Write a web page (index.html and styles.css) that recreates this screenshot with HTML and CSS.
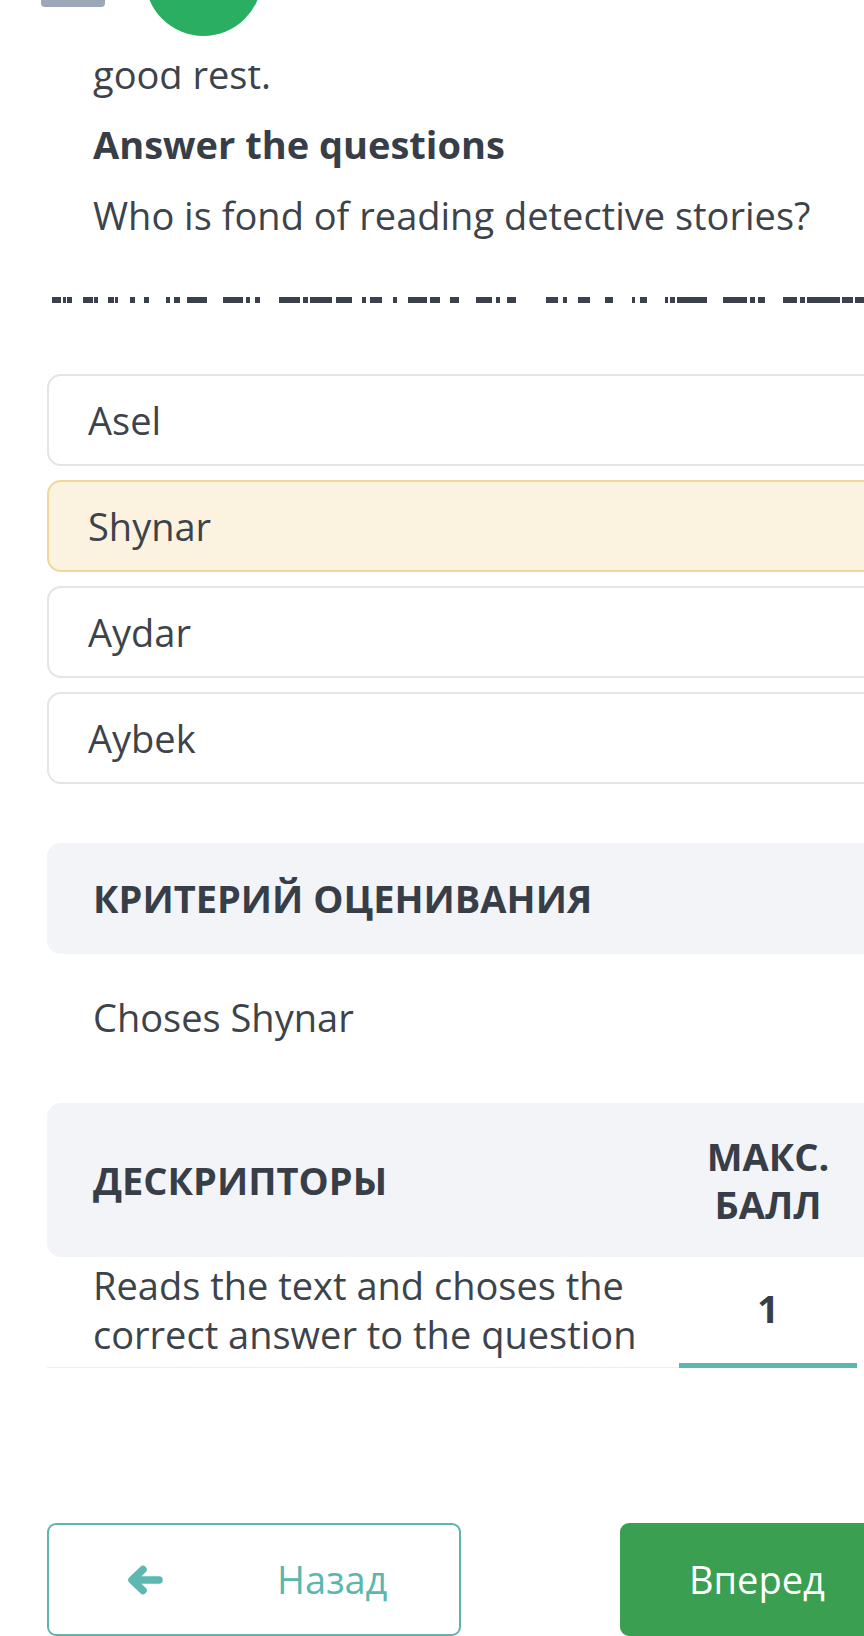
FILE: index.html
```html
<!DOCTYPE html>
<html lang="ru">
<head>
<meta charset="utf-8">
<title>Задание</title>
<link rel="stylesheet" href="styles.css">
</head>
<body>
<div class="viewport">
  <header class="topbar">
    <span class="tab-indicator"></span>
    <span class="avatar"></span>
  </header>
  <main class="content">
    <p class="text">good rest.</p>
    <p class="text heading">Answer the questions</p>
    <p class="text question">Who is fond of reading detective stories?</p>
    <div class="blank">
      <svg width="817" height="6" viewBox="0 0 817 6" aria-hidden="true">
        <g fill="#3b414a">
          <rect x="5" y="0" width="9" height="6"/>
          <rect x="16" y="0" width="3" height="6"/>
          <rect x="20" y="0" width="5" height="6"/>
          <rect x="36" y="0" width="10" height="6"/>
          <rect x="47" y="0" width="4" height="6"/>
          <rect x="61" y="0" width="6" height="6"/>
          <rect x="68" y="0" width="3" height="6"/>
          <rect x="83" y="0" width="5" height="6"/>
          <rect x="97" y="0" width="5" height="6"/>
          <rect x="119" y="0" width="4" height="6"/>
          <rect x="127" y="0" width="6" height="6"/>
          <rect x="140" y="0" width="20" height="6"/>
          <rect x="176" y="0" width="20" height="6"/>
          <rect x="199" y="0" width="4" height="6"/>
          <rect x="208" y="0" width="5" height="6"/>
          <rect x="232" y="0" width="21" height="6"/>
          <rect x="256" y="0" width="5" height="6"/>
          <rect x="263" y="0" width="22" height="6"/>
          <rect x="289" y="0" width="16" height="6"/>
          <rect x="315" y="0" width="4" height="6"/>
          <rect x="323" y="0" width="12" height="6"/>
          <rect x="346" y="0" width="4" height="6"/>
          <rect x="361" y="0" width="19" height="6"/>
          <rect x="383" y="0" width="10" height="6"/>
          <rect x="403" y="0" width="9" height="6"/>
          <rect x="429" y="0" width="16" height="6"/>
          <rect x="449" y="0" width="4" height="6"/>
          <rect x="460" y="0" width="9" height="6"/>
          <rect x="499" y="0" width="12" height="6"/>
          <rect x="516" y="0" width="4" height="6"/>
          <rect x="531" y="0" width="12" height="6"/>
          <rect x="558" y="0" width="8" height="6"/>
          <rect x="585" y="0" width="3" height="6"/>
          <rect x="593" y="0" width="7" height="6"/>
          <rect x="618" y="0" width="3" height="6"/>
          <rect x="623" y="0" width="5" height="6"/>
          <rect x="630" y="0" width="30" height="6"/>
          <rect x="676" y="0" width="24" height="6"/>
          <rect x="703" y="0" width="5" height="6"/>
          <rect x="711" y="0" width="7" height="6"/>
          <rect x="736" y="0" width="14" height="6"/>
          <rect x="753" y="0" width="5" height="6"/>
          <rect x="760" y="0" width="33" height="6"/>
          <rect x="795" y="0" width="11" height="6"/>
          <rect x="808" y="0" width="9" height="6"/>
        </g>
      </svg>
    </div>
    <ul class="options">
      <li class="option">Asel</li>
      <li class="option option-selected">Shynar</li>
      <li class="option">Aydar</li>
      <li class="option">Aybek</li>
    </ul>
    <section class="criteria">
      <h2 class="criteria-title">КРИТЕРИЙ ОЦЕНИВАНИЯ</h2>
    </section>
    <p class="text criteria-text">Choses Shynar</p>
    <table class="descriptors">
      <thead>
        <tr>
          <th class="col-desc">ДЕСКРИПТОРЫ</th>
          <th class="col-score">МАКС.<br>БАЛЛ</th>
          <th class="col-extra"></th>
        </tr>
      </thead>
      <tbody>
        <tr>
          <td class="cell-desc">Reads the text and choses the correct answer to the question</td>
          <td class="cell-score">1</td>
          <td class="cell-extra"></td>
        </tr>
      </tbody>
    </table>
    <nav class="nav">
      <button class="btn btn-back" type="button">
        <svg class="btn-icon" width="37" height="30" viewBox="0 0 37 30" aria-hidden="true"><path d="M16 4.5 L5 15 L16 25.5 M7 15 H32" fill="none" stroke="#5cb8b0" stroke-width="7.5" stroke-linecap="round" stroke-linejoin="round"/></svg>
        <span class="btn-label">Назад</span>
      </button>
      <button class="btn btn-next" type="button">
        <span class="btn-label">Вперед</span>
      </button>
    </nav>
  </main>
</div>
</body>
</html>
```
FILE: styles.css
```css
html, body {
  margin: 0;
  padding: 0;
  background: #ffffff;
}

body {
  font-family: "Open Sans", "Noto Sans", "Liberation Sans", sans-serif;
  color: #3d434b;
  font-size: 38px;
  line-height: 49px;
}

.viewport {
  position: relative;
  width: 864px;
  height: 1636px;
  overflow: hidden;
}

.topbar {
  position: absolute;
  top: 0;
  left: 0;
  right: 0;
  height: 66px;
  background: #ffffff;
  z-index: 5;
  display: flex;
  align-items: flex-start;
}

.tab-indicator {
  display: block;
  width: 64px;
  height: 7px;
  margin-left: 41px;
  background: #9aa8b8;
  border-radius: 0 0 4px 4px;
}

.avatar {
  display: block;
  width: 117px;
  height: 117px;
  margin-left: 40px;
  margin-top: -81px;
  border-radius: 50%;
  background: #2aae62;
}

.content {
  width: 880px;
  margin-left: 47px;
  padding-top: 50px;
}

.text {
  margin: 0;
  padding-left: 46px;
}

.heading {
  margin-top: 21px;
  font-weight: 700;
  color: #383e47;
}

.question {
  margin-top: 22px;
}

.blank {
  margin-top: 57px;
  height: 6px;
  line-height: 0;
}

.blank svg {
  display: block;
}

.options {
  list-style: none;
  margin: 71px 0 0;
  padding: 0;
  display: flex;
  flex-direction: column;
  gap: 14px;
}

.option {
  box-sizing: border-box;
  height: 92px;
  padding: 0 39px;
  display: flex;
  align-items: center;
  border: 2px solid #e2e5e9;
  border-radius: 14px;
  background: #ffffff;
}

.option-selected {
  background: #fbf3df;
  border-color: #efd89a;
}

.criteria {
  margin-top: 59px;
  padding: 31px 46px;
  background: #f2f4f7;
  border-radius: 14px;
}

.criteria-title {
  margin: 0;
  font-size: 38px;
  line-height: 49px;
  font-weight: 700;
  color: #383e47;
}

.criteria-text {
  margin-top: 39px;
}

.descriptors {
  margin-top: 61px;
  width: 880px;
  border-collapse: separate;
  border-spacing: 0;
  table-layout: fixed;
}

.descriptors th {
  background: #f2f4f7;
  font-weight: 700;
  color: #383e47;
  padding: 29px 0;
  line-height: 48px;
  vertical-align: middle;
}

.descriptors th.col-desc {
  width: 586px;
  text-align: left;
  padding-left: 46px;
  border-radius: 14px 0 0 14px;
}

.descriptors th.col-score {
  width: 178px;
  text-align: center;
}

.descriptors td {
  padding: 4px 0 8px;
  vertical-align: middle;
  border-bottom: 1px solid #eceef1;
}

.descriptors td.cell-desc {
  padding-left: 46px;
  padding-right: 40px;
}

.descriptors td.cell-score {
  text-align: center;
  font-weight: 700;
  color: #383e47;
  border-bottom: 5px solid #5bb7ae;
}

.descriptors td.cell-extra {
  border-bottom: none;
}

.nav {
  margin-top: 155px;
  display: flex;
  gap: 159px;
}

.btn {
  box-sizing: border-box;
  flex: 0 0 414px;
  width: 414px;
  height: 113px;
  display: flex;
  align-items: center;
  font-family: inherit;
  font-size: 38px;
  line-height: 49px;
  border-radius: 9px;
  cursor: pointer;
  padding: 0;
}

.btn-back {
  background: #ffffff;
  border: 2px solid #5fb4ad;
  color: #5bb7ae;
  padding-left: 78px;
}

.btn-icon {
  display: block;
  flex: 0 0 auto;
  width: 37px;
  height: 30px;
}

.btn-back .btn-label {
  margin-left: 113px;
}

.btn-next {
  background: #3b9f51;
  border: 2px solid #3b9f51;
  color: #ffffff;
  padding-left: 67px;
}
```
